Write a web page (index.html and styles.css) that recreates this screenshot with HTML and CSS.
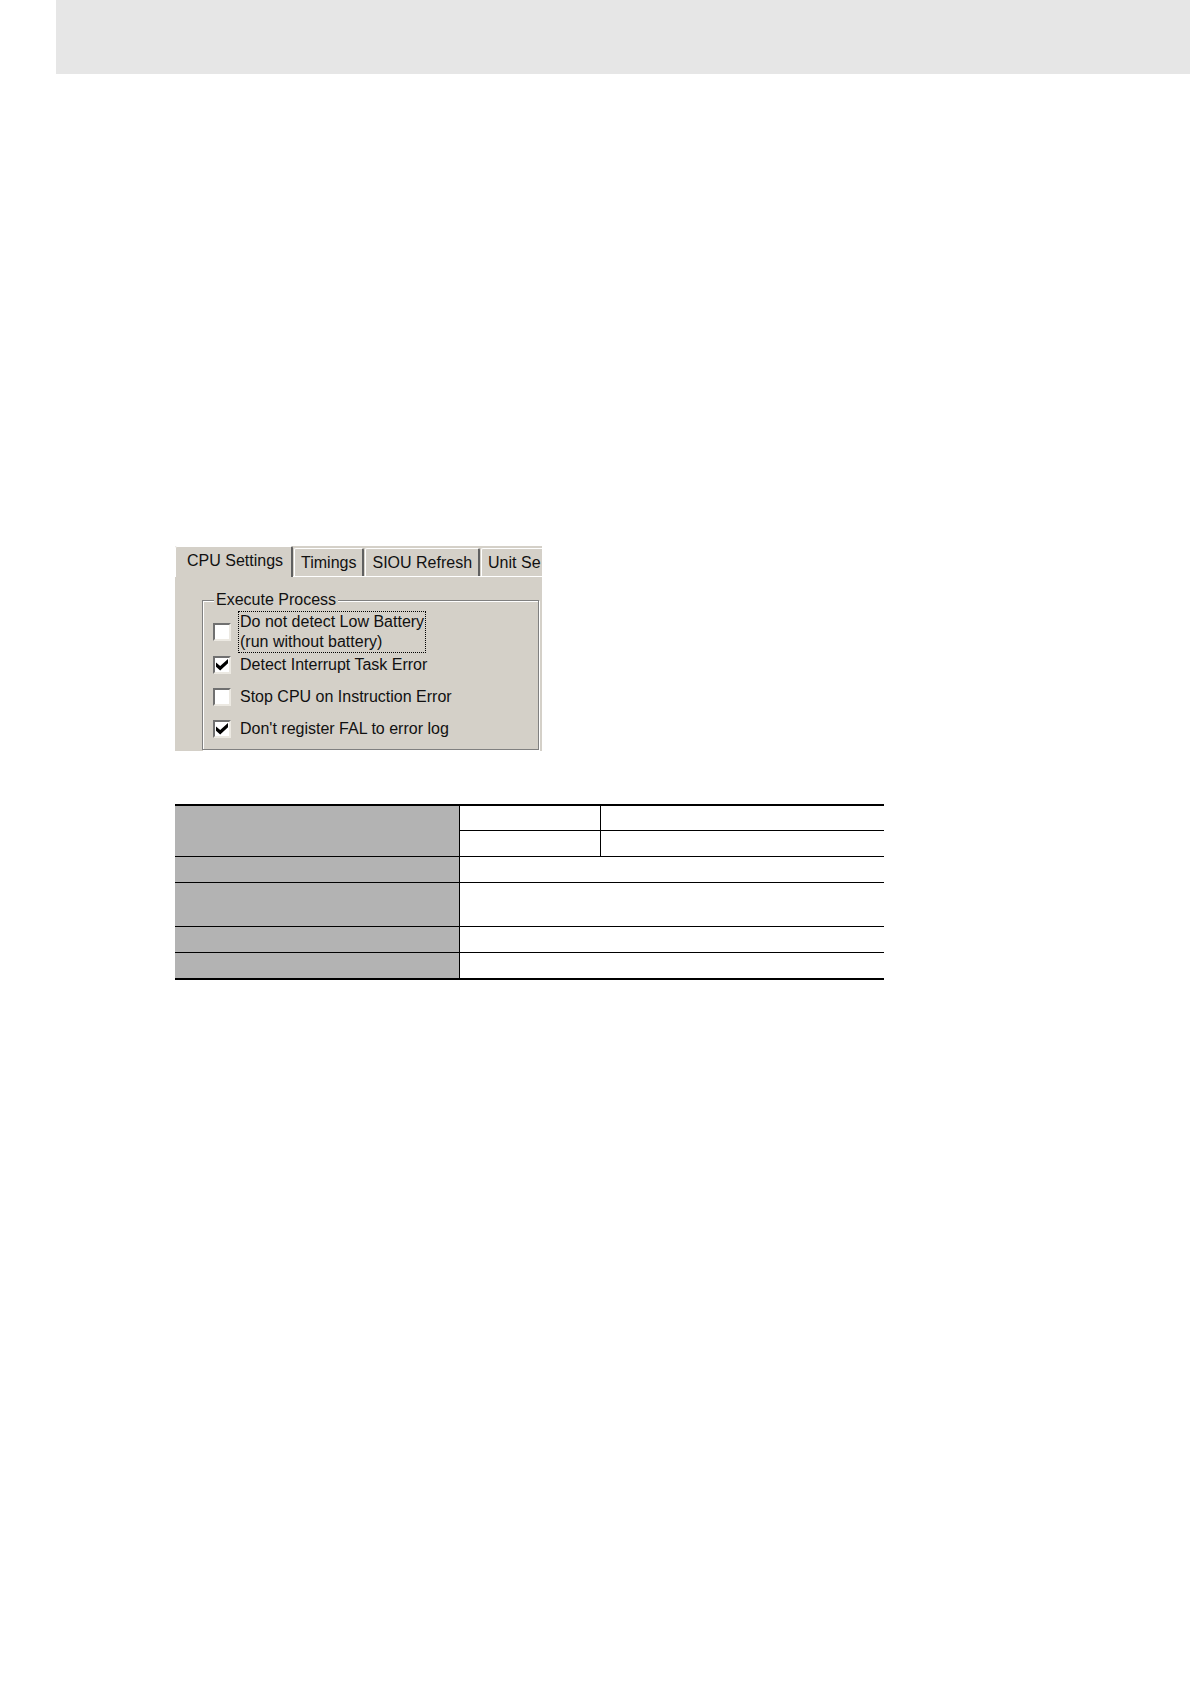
FILE: index.html
```html
<!DOCTYPE html>
<html lang="en">
<head>
    <meta charset="UTF-8">
    <meta name="viewport" content="width=device-width, initial-scale=1.0">
    <title>CPU Settings</title>
    <link rel="stylesheet" href="styles.css">
</head>
<body>
    <header class="page-header"></header>

    <main class="content">
        <form class="settings">
            <div class="tabs" role="tablist">
                <button type="button" class="tab active" role="tab" aria-selected="true">CPU Settings</button>
                <button type="button" class="tab" role="tab">Timings</button>
                <button type="button" class="tab" role="tab">SIOU Refresh</button>
                <button type="button" class="tab tab-cut" role="tab">Unit Se</button>
            </div>
            <div class="tab-panel" role="tabpanel">
                <fieldset class="group">
                    <legend>Execute Process</legend>
                    <div class="option">
                        <input type="checkbox" id="battery">
                        <label for="battery" class="focused">Do not detect Low Battery<br>(run without battery)</label>
                    </div>
                    <div class="option">
                        <input type="checkbox" id="interrupt" checked>
                        <label for="interrupt">Detect Interrupt Task Error</label>
                    </div>
                    <div class="option">
                        <input type="checkbox" id="instruction">
                        <label for="instruction">Stop CPU on Instruction Error</label>
                    </div>
                    <div class="option">
                        <input type="checkbox" id="fal" checked>
                        <label for="fal">Don't register FAL to error log</label>
                    </div>
                </fieldset>
            </div>
        </form>

        <table class="spec-table">
            <colgroup>
                <col class="col-name">
                <col class="col-key">
                <col class="col-value">
            </colgroup>
            <tbody>
                <tr class="first">
                    <th rowspan="2"></th>
                    <td class="key"></td>
                    <td></td>
                </tr>
                <tr>
                    <td class="key"></td>
                    <td></td>
                </tr>
                <tr>
                    <th></th>
                    <td colspan="2"></td>
                </tr>
                <tr class="tall">
                    <th></th>
                    <td colspan="2"></td>
                </tr>
                <tr>
                    <th></th>
                    <td colspan="2"></td>
                </tr>
                <tr class="last">
                    <th></th>
                    <td colspan="2"></td>
                </tr>
            </tbody>
        </table>
    </main>
</body>
</html>
```
FILE: styles.css
```css
* {
    box-sizing: border-box;
}
body {
    font-family: "Liberation Sans", Arial, sans-serif;
    font-size: 16px;
    color: #111;
    background-color: white;
    margin: 0;
}
.page-header {
    height: 74px;
    margin-left: 56px;
    background-color: #e6e6e6;
}
.content {
    padding: 472px 56px 56px 175px;
}

/* Settings dialog */
.settings {
    max-width: 367px;
    background-color: #d4d0c8;
    overflow: hidden;
}
.tabs {
    display: flex;
    align-items: flex-end;
    height: 31px;
    box-shadow: inset 0 -1px white;
}
.tab {
    flex: none;
    height: 28px;
    margin: 0 0 1px 1px;
    padding: 1px 6px 0;
    font: inherit;
    color: inherit;
    background-color: #d4d0c8;
    border: solid;
    border-width: 1px 2px 0 1px;
    border-color: white #606060 white white;
    border-radius: 2px 2px 0 0;
}
.tab.active {
    height: 31px;
    margin: 0;
    padding: 0 8px 2px 11px;
}
/* Last tab runs off the edge of the dialog */
.tab.tab-cut {
    flex: 1;
    padding-right: 0;
    border-right: none;
    border-radius: 2px 0 0 0;
    text-align: left;
    white-space: nowrap;
}
.tab-panel {
    padding: 14px 3px 1px 27px;
}

/* Etched group box */
.group {
    min-width: 0;
    margin: 0;
    padding: 2px 9px 9px 10px;
    border: 1px solid #808080;
    box-shadow: 1px 1px white, inset 1px 1px white;
}
.group legend {
    margin-left: 1px;
    padding: 0 2px;
    line-height: 18px;
    background-color: #d4d0c8;
}
.option {
    display: flex;
    align-items: center;
    gap: 7px;
    margin-bottom: 10px;
}
.option:first-of-type {
    margin-bottom: 1px;
}
.option:last-child {
    margin-bottom: 0;
}
.option label {
    padding: 0 1px;
    border: 1px solid transparent;
    line-height: 20px;
    white-space: nowrap;
}
.option label.focused {
    border: 1px dotted black;
}
.option input {
    appearance: none;
    flex: none;
    width: 18px;
    height: 18px;
    margin: 0;
    background-color: white;
    border: 2px solid;
    border-color: #707070 #ece9e2 #ece9e2 #707070;
}
.option input:checked::before {
    content: "";
    display: block;
    width: 12px;
    height: 12px;
    margin: 1px;
    background-color: black;
    clip-path: polygon(0 30%, 35% 58%, 100% 0, 100% 35%, 35% 95%, 0 65%);
}

/* Specification table */
.spec-table {
    width: 100%;
    max-width: 709px;
    margin-top: 53px;
    table-layout: fixed;
    border-spacing: 0;
    border-top: 2px solid black;
    border-bottom: 2px solid black;
}
.col-name {
    width: 285px;
}
.col-key {
    width: 141px;
}
.spec-table th,
.spec-table td {
    height: 26px;
    padding: 0;
    border-bottom: 1px solid black;
}
.spec-table th {
    background-color: #b3b3b3;
    border-right: 1px solid black;
}
.spec-table .key {
    border-right: 1px solid black;
}
.spec-table .first td {
    height: 25px;
}
.spec-table .tall td {
    height: 44px;
}
.spec-table .last th,
.spec-table .last td {
    height: 25px;
    border-bottom: none;
}
```
